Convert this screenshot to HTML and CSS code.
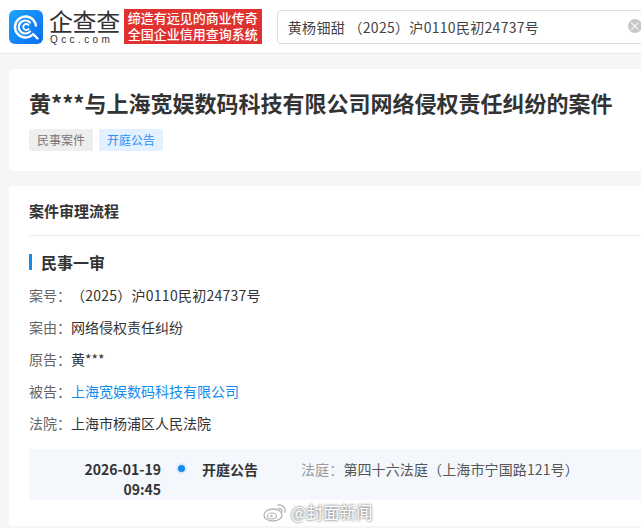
FILE: index.html
```html
<!DOCTYPE html>
<html lang="zh">
<head>
<meta charset="utf-8">
<title>案件详情</title>
<link rel="stylesheet" href="styles.css">
</head>
<body>
<header class="topbar">
  <svg class="logo-icon" viewBox="0 0 34 34" width="34" height="34">
    <defs><linearGradient id="g" x1="0" y1="0" x2="1" y2="1"><stop offset="0" stop-color="#1fa4ff"/><stop offset="1" stop-color="#0a6cf0"/></linearGradient></defs>
    <rect width="34" height="34" rx="6" fill="url(#g)"/>
    <circle cx="16.5" cy="17" r="10.5" fill="none" stroke="#fff" stroke-width="2.4" stroke-dasharray="56 10" transform="rotate(50 16.5 17)"/>
    <path d="M21 12.5a6.5 6.5 0 1 0 0 9" fill="none" stroke="#fff" stroke-width="2.2" stroke-linecap="round"/>
    <path d="M19.5 15a3 3 0 1 0 0 4" fill="none" stroke="#fff" stroke-width="1.8" stroke-linecap="round"/>
    <path d="M24 24l4.5 4.5" stroke="#fff" stroke-width="2.4" stroke-linecap="round"/>
  </svg>
  <div class="logo-text">
    <div class="logo-cn">企查查</div>
    <div class="logo-en">Qcc.com</div>
  </div>
  <div class="slogan">
    <div>缔造有远见的商业传奇</div>
    <div>全国企业信用查询系统</div>
  </div>
  <div class="search">
    <span class="search-text">黄杨钿甜 （2025）沪0110民初24737号</span>
    <span class="clear">×</span>
  </div>
</header>

<main class="page">
  <section class="card head-card">
    <h1 class="case-title">黄***与上海宽娱数码科技有限公司网络侵权责任纠纷的案件</h1>
    <div class="tags">
      <span class="tag tag-grey">民事案件</span>
      <span class="tag tag-blue">开庭公告</span>
    </div>
  </section>

  <section class="card flow-card">
    <h2 class="flow-title">案件审理流程</h2>
    <div class="flow-body">
      <h3 class="stage"><span class="stage-bar"></span>民事一审</h3>
      <dl class="info">
        <div class="info-row"><dt>案号：</dt><dd class="case-no">（2025）沪0110民初24737号</dd></div>
        <div class="info-row"><dt>案由：</dt><dd>网络侵权责任纠纷</dd></div>
        <div class="info-row"><dt>原告：</dt><dd>黄***</dd></div>
        <div class="info-row"><dt>被告：</dt><dd class="link">上海宽娱数码科技有限公司</dd></div>
        <div class="info-row"><dt>法院：</dt><dd>上海市杨浦区人民法院</dd></div>
      </dl>
      <div class="event">
        <div class="event-time">2026-01-19<br>09:45</div>
        <span class="event-dot"></span>
        <div class="event-name">开庭公告</div>
        <div class="event-detail"><span class="muted">法庭：</span>第四十六法庭（上海市宁国路121号）</div>
      </div>
    </div>
  </section>
</main>

<div class="watermark">
  <svg viewBox="0 0 24 20" width="24" height="20">
    <ellipse cx="10" cy="13" rx="9" ry="6" fill="#fff" stroke="#b5b5b5" stroke-width="1.3"/>
    <ellipse cx="9" cy="14" rx="4.5" ry="3" fill="none" stroke="#b5b5b5" stroke-width="1.2"/>
    <circle cx="8.500" cy="14" r="1.2" fill="#b5b5b5"/>
    <path d="M15 3a6 6 0 0 1 7 7M15.500 6.500a3 3 0 0 1 3.500 3.500" fill="none" stroke="#b5b5b5" stroke-width="1.4" stroke-linecap="round"/>
  </svg>
  <span class="watermark-text">@封面新闻</span>
</div>
</body>
</html>
```
FILE: styles.css
```css
* { box-sizing: border-box; }
html, body { margin: 0; padding: 0; }
body {
  width: 641px;
  height: 528px;
  overflow: hidden;
  position: relative;
  background: #f6f6f6;
  color: #333;
  font-family: "Microsoft YaHei", "Noto Sans CJK SC", "Noto Sans", sans-serif;
  font-size: 14px;
}
.topbar {
  display: flex;
  align-items: center;
  height: 54px;
  padding-left: 9px;
  background: #fff;
  border-bottom: 1px solid #e8e8e8;
  white-space: nowrap;
}
.logo-icon { flex: none; }
.logo-text { margin-left: 6px; width: 72px; color: #333; }
.logo-cn { font-size: 24px; line-height: 24px; letter-spacing: -0.4px; font-weight: 400; }
.logo-en { font-family: "Liberation Sans", sans-serif; font-size: 10px; line-height: 10px; letter-spacing: 3.4px; margin-top: 2px; padding-left: 1px; }
.slogan {
  flex: none;
  width: 138px;
  height: 35px;
  margin-left: 4px;
  padding-top: 1px;
  background: #e03131;
  color: #fff;
  font-size: 13px;
  line-height: 16px;
  text-align: center;
  font-weight: 500;
}
.search {
  flex: none;
  display: flex;
  align-items: center;
  justify-content: space-between;
  width: 372px;
  height: 34px;
  margin-left: 15px;
  padding: 0 0 0 10px;
  border: 1px solid #dedede;
  border-radius: 4px;
  background: #fff;
  font-size: 14px;
  letter-spacing: 0.3px;
  color: #444;
}
.clear {
  position: absolute;
  left: 628px;
  top: 19px;
  width: 14px;
  height: 14px;
  border-radius: 50%;
  background: #c8c8c8;
  color: #fff;
  font-size: 12px;
  line-height: 14px;
  text-align: center;
}
.page {
  display: flex;
  flex-direction: column;
  gap: 15px;
  width: 660px;
  padding: 15px 0 0 9px;
}
.card { background: #fff; border-radius: 4px; }
.head-card { height: 102px; padding: 18px 0 0 20px; }
.case-title {
  margin: 0;
  font-size: 22px;
  line-height: 30px;
  font-weight: 700;
  color: #333;
  white-space: nowrap;
}
.tags { display: flex; gap: 6px; margin-top: 12px; }
.tag {
  height: 22px;
  padding: 0 8px;
  border-radius: 2px;
  font-size: 12px;
  line-height: 22px;
}
.tag-grey { background: #eeeeee; color: #777; }
.tag-blue { background: #e2f1ff; color: #2a8ff0; }
.flow-card { height: 340px; padding-left: 20px; }
.flow-title {
  margin: 0;
  height: 50px;
  border-bottom: 1px solid #eeeeee;
  font-size: 15px;
  font-weight: 700;
  line-height: 50px;
  color: #333;
}
.flow-body { padding-top: 16px; }
.stage {
  display: flex;
  align-items: center;
  margin: 0;
  height: 20px;
  font-size: 16px;
  font-weight: 700;
  color: #333;
}
.stage-bar { width: 3px; height: 16px; margin-right: 9px; background: #128bed; }
.info { margin: 0; padding-top: 7px; }
.info-row {
  display: flex;
  height: 32px;
  align-items: center;
  font-size: 14px;
}
.info-row dt { color: #666; width: 42px; }
.info-row dd { margin: 0; color: #333; }
.info-row dd.case-no { letter-spacing: 0.25px; }
.info-row dd.link { color: #128bed; }
.event {
  display: flex;
  align-items: flex-start;
  width: 640px;
  height: 51px;
  margin-top: 10px;
  padding-top: 10px;
  background: #f4f8fd;
}
.event-time {
  width: 132px;
  text-align: right;
  font-weight: 700;
  font-size: 14px;
  line-height: 20px;
  color: #333;
}
.event-dot {
  flex: none;
  width: 7px;
  height: 7px;
  margin: 6px 0 0 17px;
  border-radius: 50%;
  background: #128bed;
  box-shadow: 0 0 0 2px #d9ebfb;
}
.event-name {
  width: 99px;
  margin-left: 17px;
  font-weight: 700;
  font-size: 14px;
  line-height: 20px;
  color: #333;
}
.event-detail { font-size: 14px; line-height: 20px; letter-spacing: 0.12px; color: #555; white-space: nowrap; }
.muted { color: #999; }
.watermark {
  position: absolute;
  left: 263px;
  top: 502px;
  display: flex;
  align-items: center;
  gap: 4px;
}
.watermark-text {
  color: #fff;
  font-size: 16.500px;
  line-height: 20px;
  text-shadow: 0 0 2px #777, 0 0 3px #999;
}
```
